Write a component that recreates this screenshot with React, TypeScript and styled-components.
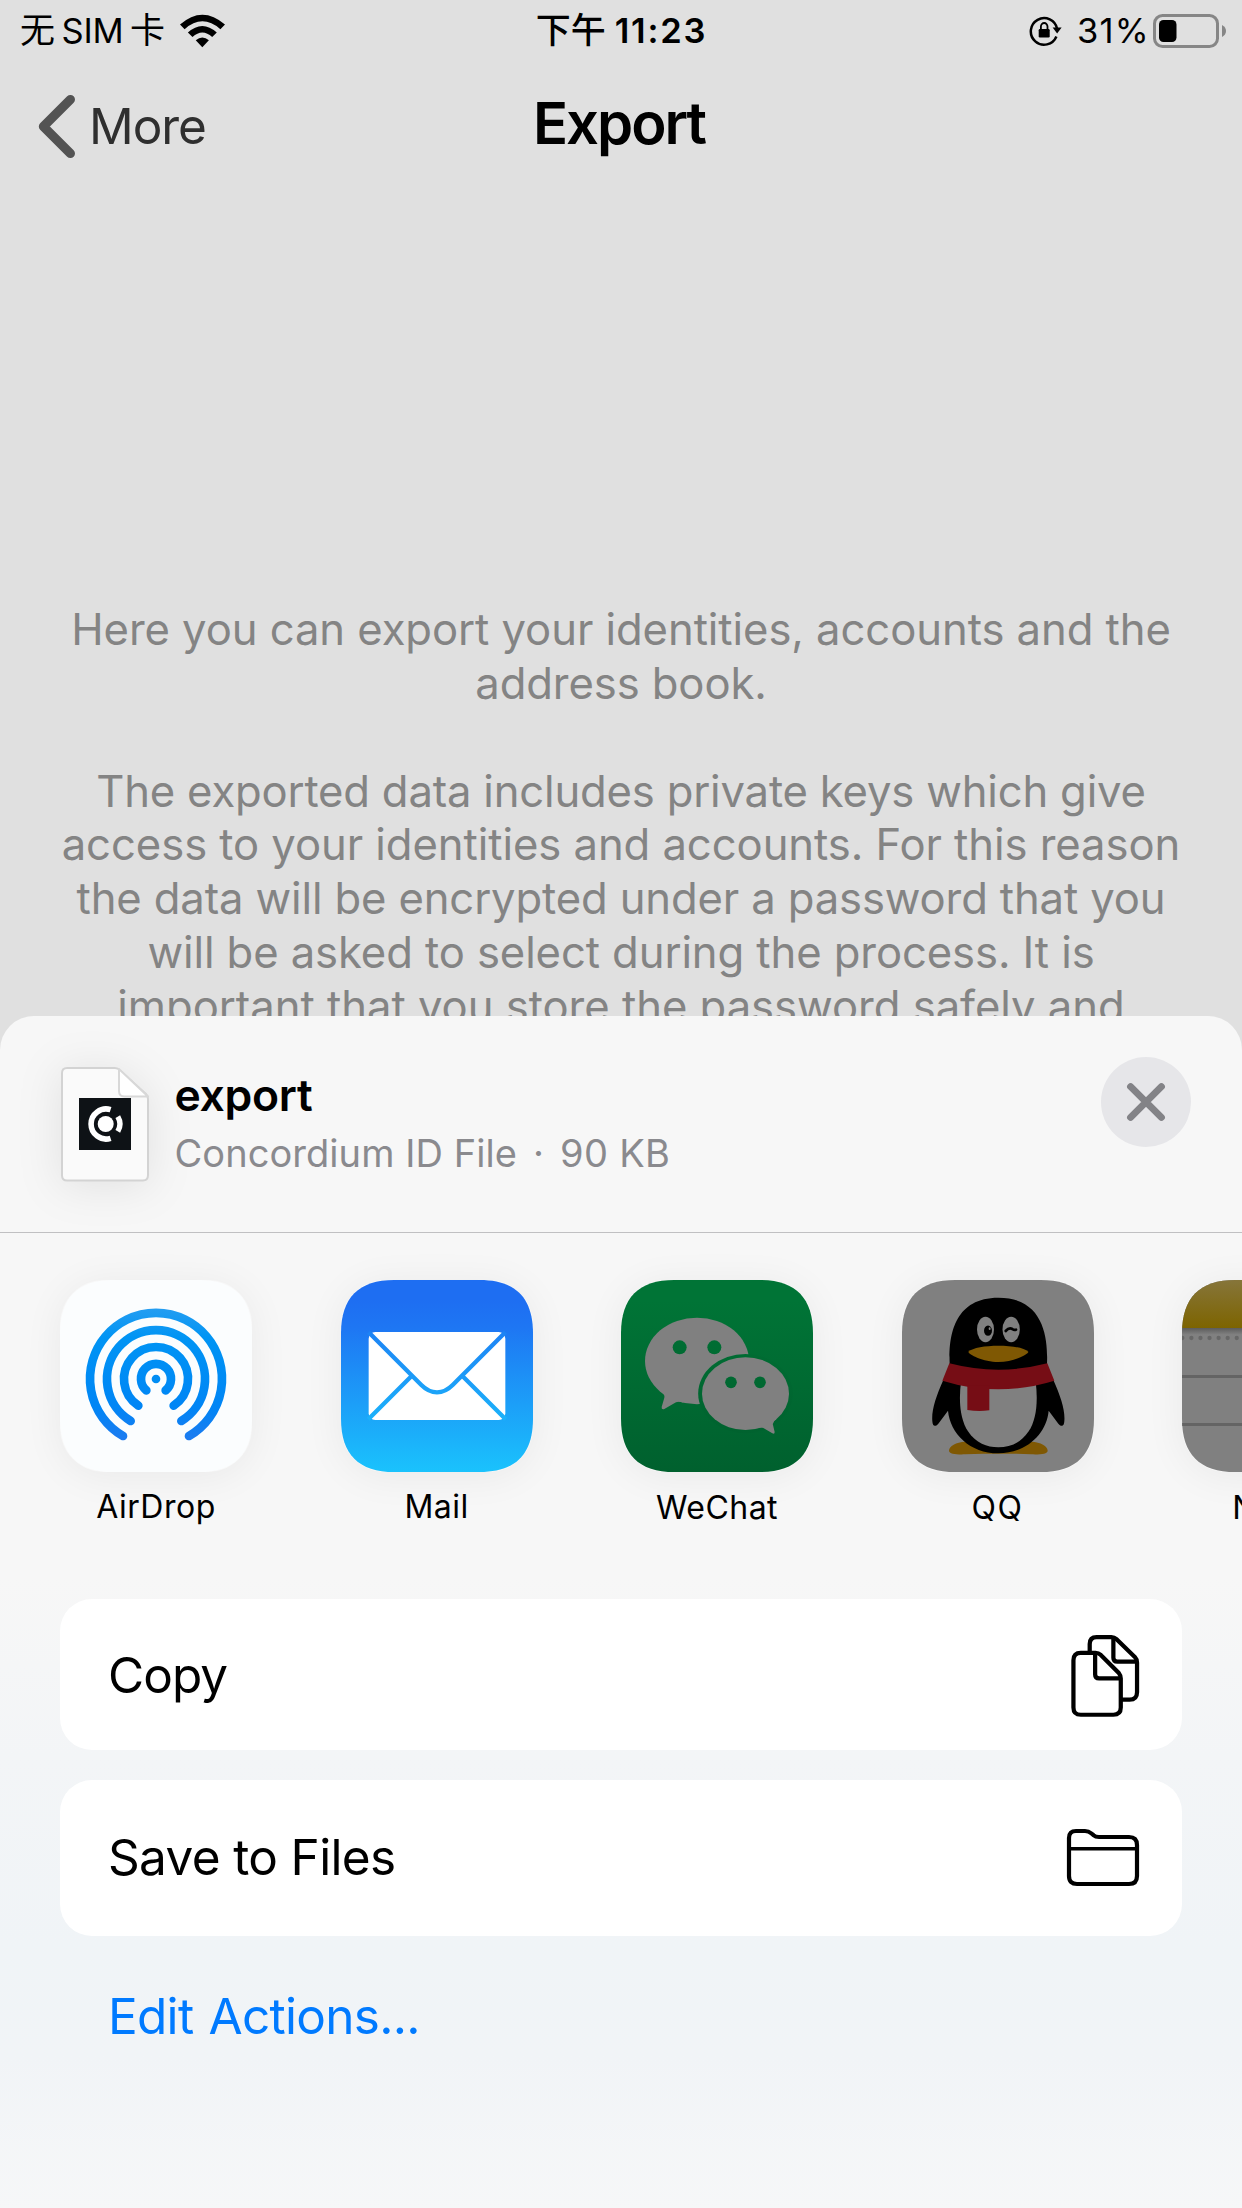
import React from "react";
import styled, { createGlobalStyle } from "styled-components";

const GlobalStyle = createGlobalStyle`
  *, *::before, *::after { box-sizing: border-box; }
  body {
    margin: 0;
    background: #e0e0e0;
    font-family: Inter, "Noto Sans CJK SC", "Liberation Sans", sans-serif;
  }
  svg { display: block; flex: none; }
`;

const Screen = styled.div`
  position: relative;
  width: 1242px;
  height: 2208px;
  overflow: hidden;
  background: #e0e0e0;
  color: #000;
`;

/* ---------- status bar ---------- */

const StatusBar = styled.header`
  display: grid;
  grid-template-columns: 1fr auto 1fr;
  align-items: center;
  height: 62px;
  padding: 0 15px 0 20px;
`;

const StatusGroup = styled.div<{ $end?: boolean; $gap: number }>`
  display: flex;
  align-items: center;
  gap: ${(p) => p.$gap}px;
  justify-content: ${(p) => (p.$end ? "flex-end" : "flex-start")};
`;

const StatusText = styled.div<{ $gap?: number; $left?: number; $right?: number }>`
  display: flex;
  align-items: baseline;
  gap: ${(p) => p.$gap ?? 0}px;
  height: 44px;
  padding-left: ${(p) => p.$left ?? 0}px;
  padding-right: ${(p) => p.$right ?? 0}px;
  line-height: 44px;
  font-size: 34.5px;
  white-space: nowrap;
`;

const Han = styled.span<{ $medium?: boolean }>`
  font-family: "Noto Sans CJK SC", sans-serif;
  font-size: 35px;
  line-height: 38.5px;
  font-weight: ${(p) => (p.$medium ? 500 : 400)};
`;

const Latin = styled.span<{ $spacing: number; $bold?: boolean }>`
  letter-spacing: ${(p) => p.$spacing}px;
  font-weight: ${(p) => (p.$bold ? 600 : 400)};
`;

/* ---------- navigation ---------- */

const NavBar = styled.nav`
  display: grid;
  grid-template-columns: 1fr auto 1fr;
  align-items: center;
  height: 128px;
`;

const BackButton = styled.div`
  display: flex;
  align-items: center;
  gap: 10px;
  padding-left: 34px;
  font-size: 49.5px;
  line-height: 60px;
  letter-spacing: -1.07px;
  color: #2f2f2f;
`;

const NavTitle = styled.h1`
  margin: 0;
  padding: 0 4px 6px 0;
  font-size: 58px;
  line-height: 70px;
  font-weight: 600;
  letter-spacing: -2.04px;
`;

/* ---------- body copy ---------- */

const Copy = styled.main`
  display: flex;
  flex-direction: column;
  gap: 53.8px;
  padding-top: 413.2px;
  font-size: 43.6px;
  line-height: 53.8px;
  color: #848484;
  text-align: center;
`;

const Paragraph = styled.p`
  margin: 0;
`;

const TextLine = styled.span<{ $spacing: number }>`
  display: block;
  white-space: nowrap;
  letter-spacing: ${(p) => p.$spacing}px;
`;

/* ---------- share sheet ---------- */

const Sheet = styled.section`
  position: absolute;
  left: 0;
  right: 0;
  bottom: 0;
  height: 1192px;
  border-radius: 34px 34px 0 0;
  overflow: hidden;
  background: linear-gradient(
    180deg,
    #f7f7f7 0,
    #f7f7f7 560px,
    #f3f5f7 740px,
    #f0f4f7 930px,
    #f1f4f7 1040px,
    #f6f7f8 1192px
  );
`;

const SheetHeader = styled.div`
  display: flex;
  align-items: flex-start;
  height: 217px;
  padding: 0 51px 0 61px;
  border-bottom: 1px solid #c0c0c2;
`;

const FileThumb = styled.div`
  margin-top: 51px;
  filter: drop-shadow(0 4px 22px rgba(0, 0, 0, 0.09));
`;

const FileInfo = styled.div`
  flex: 1;
  margin: 50px 0 0 25.5px;
  line-height: 58px;
`;

const FileName = styled.div`
  font-size: 44.5px;
  font-weight: 600;
  letter-spacing: -0.3px;
`;

const FileMeta = styled.div`
  display: flex;
  font-size: 38px;
  letter-spacing: 0.06px;
  color: #8a8a8e;
`;

const Separator = styled.span`
  width: 43px;
  text-align: center;
`;

const FileSize = styled.span`
  letter-spacing: 0.35px;
`;

const CloseButton = styled.button`
  display: flex;
  align-items: center;
  justify-content: center;
  width: 90px;
  height: 90px;
  margin-top: 41px;
  padding: 0;
  border: 0;
  border-radius: 50%;
  background: #e6e6e9;
`;

const AppRow = styled.div`
  display: flex;
  gap: 88.5px;
  height: 366px;
  padding: 47px 0 0 60px;
`;

const AppItem = styled.div`
  flex: none;
  display: flex;
  flex-direction: column;
  align-items: center;
  width: 192px;
`;

const AppIcon = styled.div`
  width: 192px;
  height: 192px;
  border-radius: 44px;
  box-shadow: 0 4px 40px rgba(0, 0, 0, 0.06);
`;

const AppLabel = styled.div<{ $spacing: number; $top: number }>`
  margin-top: ${(p) => p.$top}px;
  font-size: 32px;
  line-height: 40px;
  white-space: nowrap;
  letter-spacing: ${(p) => p.$spacing}px;
`;

const Actions = styled.div`
  display: flex;
  flex-direction: column;
  gap: 30px;
  padding: 0 60px;
`;

const ActionCard = styled.div<{ $height: number; $spacing: number; $lift?: number }>`
  display: flex;
  align-items: center;
  justify-content: space-between;
  height: ${(p) => p.$height}px;
  padding: 0 42px ${(p) => p.$lift ?? 0}px 48px;
  border-radius: 32px;
  background: #fff;
  font-size: 49.5px;
  line-height: 60px;
  letter-spacing: ${(p) => p.$spacing}px;

  svg {
    margin-top: 2px;
  }
`;

const EditActions = styled.div`
  display: flex;
  align-items: center;
  height: 160px;
  padding-left: 108px;
  font-size: 49.5px;
  line-height: 60px;
  letter-spacing: -0.72px;
  word-spacing: 2px;
  color: #007aff;
`;

/* ---------- small glyphs ---------- */

const WifiGlyph = () => (
  <svg width="45" height="34" viewBox="538 39 137 99">
    <path d="M538 69 Q606 9 675 69 L661 83 Q606 35 552 83 Z" />
    <path d="M562 93 Q606 53 650 93 L636 107 Q606 79 576 107 Z" />
    <path d="M586 117 Q606 99 626 117 L606 138 Z" />
  </svg>
);

const LockGlyph = () => (
  <svg width="34" height="32" viewBox="0 0 34 32">
    <path d="M27.4 21.5 A13.3 13.3 0 1 1 28.2 14" fill="none" stroke="#000" strokeWidth="2.5" />
    <path d="M23.6 12.6 H32.6 L28.1 18.6 Z" />
    <rect x="9.7" y="14" width="11" height="8.4" rx="1.2" />
    <path d="M11.9 15 V11.6 a3.3 3.6 0 0 1 6.6 0 V15" fill="none" stroke="#000" strokeWidth="1.8" />
  </svg>
);

const BatteryGlyph = () => (
  <svg width="74" height="34" viewBox="0 0 74 34">
    <rect x="1.5" y="1.5" width="63" height="31" rx="8" fill="none" stroke="#868686" strokeWidth="3" />
    <rect x="6" y="6" width="17.5" height="22" rx="4.5" />
    <path d="M69 11 q4 2.2 4 6 t-4 6 Z" fill="#868686" />
  </svg>
);

const BackChevron = () => (
  <svg width="45" height="72" viewBox="34 90 45 72">
    <path
      d="M70.4 99.6 L43.4 126.5 L70.4 153.4"
      fill="none"
      stroke="#535353"
      strokeWidth="9.2"
      strokeLinecap="round"
      strokeLinejoin="round"
    />
  </svg>
);

const FileGlyph = () => (
  <svg width="88" height="115" viewBox="0 0 88 115">
    <path
      d="M6 1 H54 Q57 1 59 3.5 L85 27 Q87 29 87 32 V108 Q87 113.5 82 113.5 H6 Q1 113.5 1 108.5 V6 Q1 1 6 1 Z"
      fill="#fafafa"
      stroke="#d3d3d3"
      strokeWidth="2"
    />
    <path d="M58 2 V24 Q58 29.5 63.5 29.5 H87 Z" fill="#fff" stroke="#d8d8d8" strokeWidth="2" strokeLinejoin="round" />
    <rect x="18" y="31" width="52" height="52" fill="#0e1216" />
    <path d="M49.6 42.7 A15 15 0 1 0 49.6 71.3" fill="none" stroke="#fff" strokeWidth="5.6" />
    <circle cx="44.7" cy="57" r="8" fill="#fff" />
    <path d="M56.8 49.6 A14.5 14.5 0 0 1 56.8 64.4" fill="none" stroke="#fff" strokeWidth="5.4" />
  </svg>
);

const CloseGlyph = () => (
  <svg width="44" height="44" viewBox="-22 -22 44 44">
    <path d="M-15.4 -15.4 L15.4 15.4 M15.4 -15.4 L-15.4 15.4" stroke="#838387" strokeWidth="7" strokeLinecap="round" />
  </svg>
);

const CopyGlyph = () => (
  <svg width="71" height="83" viewBox="0 0 72 84" fill="none" stroke="#000" strokeWidth="4.3">
    <path d="M21 19 V10 Q21 3 28 3 H43 Q46 3 48 5 L67 23.5 Q69 25.5 69 29 V59 Q69 66.5 61.5 66.5 H53" />
    <path d="M45 3.5 V24 Q45 28 49 28 H68" />
    <path
      d="M12 19 H27 Q30 19 32 21 L50.5 39.5 Q52.5 42 52.5 45 V74.5 Q52.5 81.8 45 81.8 H12 Q4.5 81.8 4.5 74.5 V26.5 Q4.5 19 12 19 Z"
      fill="#fff"
    />
    <path d="M26.5 20 V41 Q26.5 45 30.5 45 H52" />
  </svg>
);

const FolderGlyph = () => (
  <svg width="74" height="60" viewBox="0 0 74 60" fill="none" stroke="#000" strokeWidth="4.2">
    <path d="M3 10 Q3 3 10 3 H19 Q22.5 3 25.5 5.5 L27.5 7.2 Q29.5 9 33 9 H63 Q71 9 71 17 V48 Q71 56 63 56 H11 Q3 56 3 48 Z" />
    <path d="M3 20.8 H71" strokeWidth="3.5" />
  </svg>
);

/* ---------- app icons, drawn on a 576-unit tile ---------- */

const TILE =
  "M0 160 C0 53 53 0 160 0 H416 C523 0 576 53 576 160 V416 C576 523 523 576 416 576 H160 C53 576 0 523 0 416 Z";

const Tile = ({ x, fill }: { x: number; fill: string }) => (
  <path d={TILE} transform={`translate(${x} 60)`} fill={fill} />
);

const AirDropIcon = () => (
  <svg width="192" height="192" viewBox="60 60 576 576">
    <defs>
      <linearGradient id="airdrop" gradientUnits="userSpaceOnUse" x1="0" y1="147" x2="0" y2="540">
        <stop offset="0" stopColor="#239df1" />
        <stop offset="0.22" stopColor="#0094f4" />
        <stop offset="0.75" stopColor="#0085f5" />
        <stop offset="1" stopColor="#1d7bf0" />
      </linearGradient>
    </defs>
    <Tile x={60} fill="#fbfdfe" />
    <g fill="none" stroke="url(#airdrop)" strokeWidth="26" strokeLinecap="round">
      <path d="M249 528 A198 198 0 1 1 447 528" />
      <path d="M272 483 A147 147 0 1 1 424 483" />
      <path d="M295 437 A96 96 0 1 1 401 437" />
      <path d="M319 391 A45 45 0 1 1 377 391" />
    </g>
    <circle cx="348" cy="357" r="13" fill="#008df4" />
  </svg>
);

const MailIcon = () => (
  <svg width="192" height="192" viewBox="903 60 576 576">
    <defs>
      <linearGradient id="mail" gradientUnits="userSpaceOnUse" x1="0" y1="60" x2="0" y2="636">
        <stop offset="0" stopColor="#1e6ef2" />
        <stop offset="0.14" stopColor="#1e76f3" />
        <stop offset="0.94" stopColor="#1ac7fd" />
        <stop offset="1" stopColor="#1acbfe" />
      </linearGradient>
    </defs>
    <Tile x={903} fill="url(#mail)" />
    <rect x="986" y="216" width="410" height="264" rx="20" fill="#fff" />
    <g fill="none" stroke="url(#mail)" strokeWidth="13">
      <path d="M986 217 L1144 375 Q1166 397 1191 397 T1238 375 L1396 217" />
      <path d="M1117 346 L985 478 M1265 346 L1397 478" />
    </g>
  </svg>
);

const WeChatIcon = () => (
  <svg width="192" height="192" viewBox="63 60 576 576">
    <defs>
      <linearGradient id="wechat" gradientUnits="userSpaceOnUse" x1="0" y1="60" x2="0" y2="636">
        <stop offset="0" stopColor="#007436" />
        <stop offset="1" stopColor="#005e2d" />
      </linearGradient>
    </defs>
    <Tile x={63} fill="url(#wechat)" />
    <g fill="#808080">
      <ellipse cx="291" cy="303" rx="156" ry="130" />
      <path d="M180 392 Q196 402 193 413 L185 441 Q184 450 193 447 L228 427 Q236 423 250 428 L260 380 Z" />
    </g>
    <ellipse cx="436.5" cy="401" rx="142" ry="119" fill="url(#wechat)" />
    <g fill="#808080">
      <ellipse cx="436.5" cy="401" rx="130.5" ry="109" />
      <path d="M529 478 Q516 486 519 495 L524 516 Q524 524 517 520 L490 504 Q484 501 470 505 L470 450 Z" />
    </g>
    <g fill="url(#wechat)">
      <circle cx="239" cy="262" r="21" />
      <circle cx="343" cy="262" r="21" />
      <circle cx="393" cy="367" r="17.5" />
      <circle cx="480" cy="367" r="17.5" />
    </g>
  </svg>
);

const QQIcon = () => (
  <svg width="192" height="192" viewBox="66 60 576 576">
    <Tile x={66} fill="#808080" />
    <path
      d="M207 572 C207 558 228 546 256 545 H454 C482 546 503 558 503 572 C503 582 480 584 454 583 L400 581 H310 L256 583 C230 584 207 582 207 572 Z"
      fill="#7f5803"
    />
    <path d="M190 360 C168 410 154 450 157 484 C158 499 165 502 175 491 L204 452 C210 520 270 580 355 580 C440 580 500 520 506 452 L535 491 C545 502 552 499 553 484 C556 450 542 410 520 360 Z" />
    <path d="M209 312 C206 240 215 113 355 113 C495 113 504 240 501 312 L501 345 H209 Z" />
    <path d="M243 365 C235 430 242 480 264 514 C288 550 320 562 355 562 C390 562 422 550 446 514 C468 480 475 430 467 365 Z" fill="#808080" />
    <path d="M208 310 Q355 348 502 310 L523 362 Q355 414 187 362 Z" fill="#760d15" />
    <path d="M262 376 H328 V451 Q295 455 262 450 Z" fill="#760d15" />
    <ellipse cx="316.5" cy="208.5" rx="25.5" ry="38" fill="#808080" />
    <ellipse cx="393.5" cy="208.5" rx="26" ry="38" fill="#808080" />
    <ellipse cx="324" cy="212" rx="12" ry="15.5" />
    <ellipse cx="329" cy="206" rx="3" ry="4" fill="#808080" />
    <path d="M377 213 C384 205 392 204 397 207 Q402 211 408 209" fill="none" stroke="#000" strokeWidth="8" strokeLinecap="round" />
    <path d="M265 275 C290 251 420 251 445 275 C445 283 400 306 355 306 C310 306 265 283 265 275 Z" fill="#7f5803" />
  </svg>
);

const NotesIcon = () => (
  <svg width="192" height="192" viewBox="906 60 576 576">
    <defs>
      <clipPath id="notesClip">
        <path d={TILE} transform="translate(906 60)" />
      </clipPath>
      <linearGradient id="notesBand" x1="0" y1="0" x2="0" y2="1">
        <stop offset="0" stopColor="#86753a" />
        <stop offset="1" stopColor="#7d6400" />
      </linearGradient>
      <linearGradient id="notesShade" x1="0" y1="0" x2="0" y2="1">
        <stop offset="0" stopColor="#5c5c5c" />
        <stop offset="1" stopColor="#808080" />
      </linearGradient>
    </defs>
    <g clipPath="url(#notesClip)">
      <rect x="906" y="60" width="576" height="576" fill="#808080" />
      <rect x="906" y="60" width="576" height="144" fill="url(#notesBand)" />
      <rect x="906" y="204" width="576" height="20" fill="url(#notesShade)" />
      {Array.from({ length: 22 }, (_, i) => (
        <circle key={i} cx={907 + i * 27.2} cy="234" r="6.5" fill="#676767" />
      ))}
      <rect x="906" y="345" width="576" height="9" fill="#646464" />
      <rect x="906" y="489" width="576" height="9" fill="#646464" />
    </g>
  </svg>
);

const apps = [
  { name: "AirDrop", icon: <AirDropIcon />, spacing: 0.53, top: 15 },
  { name: "Mail", icon: <MailIcon />, spacing: 0.46, top: 15 },
  { name: "WeChat", icon: <WeChatIcon />, spacing: 0.45, top: 16 },
  { name: "QQ", icon: <QQIcon />, spacing: 1.5, top: 16 },
  { name: "Notes", icon: <NotesIcon />, spacing: 0.5, top: 16 },
];

const intro = [
  { text: "Here you can export your identities, accounts and the", spacing: -0.06 },
  { text: "address book.", spacing: -0.095 },
];

const details = [
  { text: "The exported data includes private keys which give", spacing: -0.18 },
  { text: "access to your identities and accounts. For this reason", spacing: -0.055 },
  { text: "the data will be encrypted under a password that you", spacing: -0.13 },
  { text: "will be asked to select during the process. It is", spacing: -0.09 },
  { text: "important that you store the password safely and", spacing: -0.02 },
];

export default function App() {
  return (
    <>
      <GlobalStyle />
      <Screen>
        <StatusBar>
          <StatusGroup $gap={15}>
            <StatusText $gap={6.5}>
              <Han>无</Han>
              <Latin $spacing={-0.2}>SIM</Latin>
              <Han>卡</Han>
            </StatusText>
            <WifiGlyph />
          </StatusGroup>
          <StatusText $gap={9} $right={4}>
            <Han $medium>下午</Han>
            <Latin $bold $spacing={1.8}>11:23</Latin>
          </StatusText>
          <StatusGroup $end $gap={3}>
            <LockGlyph />
            <StatusText $left={10.5}>
              <Latin $spacing={1.3}>31%</Latin>
            </StatusText>
            <BatteryGlyph />
          </StatusGroup>
        </StatusBar>

        <NavBar>
          <BackButton>
            <BackChevron />
            More
          </BackButton>
          <NavTitle>Export</NavTitle>
        </NavBar>

        <Copy>
          <Paragraph>
            {intro.map((l) => (
              <TextLine key={l.text} $spacing={l.spacing}>{l.text}</TextLine>
            ))}
          </Paragraph>
          <Paragraph>
            {details.map((l) => (
              <TextLine key={l.text} $spacing={l.spacing}>{l.text}</TextLine>
            ))}
          </Paragraph>
        </Copy>

        <Sheet>
          <SheetHeader>
            <FileThumb>
              <FileGlyph />
            </FileThumb>
            <FileInfo>
              <FileName>export</FileName>
              <FileMeta>
                Concordium ID File
                <Separator>·</Separator>
                <FileSize>90 KB</FileSize>
              </FileMeta>
            </FileInfo>
            <CloseButton aria-label="Close">
              <CloseGlyph />
            </CloseButton>
          </SheetHeader>

          <AppRow>
            {apps.map((a) => (
              <AppItem key={a.name}>
                <AppIcon>{a.icon}</AppIcon>
                <AppLabel $spacing={a.spacing} $top={a.top}>{a.name}</AppLabel>
              </AppItem>
            ))}
          </AppRow>

          <Actions>
            <ActionCard $height={151} $spacing={-0.95}>
              Copy
              <CopyGlyph />
            </ActionCard>
            <ActionCard $height={156} $spacing={-0.65} $lift={3}>
              Save to Files
              <FolderGlyph />
            </ActionCard>
          </Actions>
          <EditActions>Edit Actions...</EditActions>
        </Sheet>
      </Screen>
    </>
  );
}
